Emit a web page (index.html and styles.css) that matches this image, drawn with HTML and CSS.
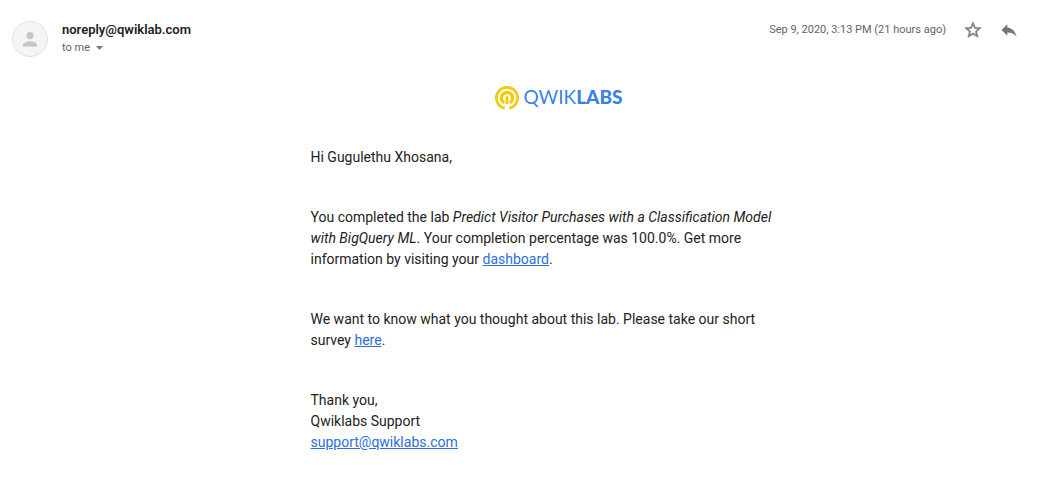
FILE: index.html
```html
<!DOCTYPE html>
<html lang="en">
<head>
<meta charset="utf-8">
<meta name="viewport" content="width=device-width, initial-scale=1">
<title>Qwiklabs email</title>
<link rel="stylesheet" href="styles.css">
</head>
<body>
<article class="message">
  <header class="message-header">
    <svg class="avatar" viewBox="0 0 36 36" aria-hidden="true">
      <circle cx="18" cy="18" r="17.5" fill="#f5f5f5" stroke="#e2e2e2"/>
      <circle cx="18" cy="14.600" r="3.600" fill="#c6c6c6"/>
      <path d="M11 25.600v-1.900c0-2.300 4.700-3.500 7-3.500s7 1.200 7 3.500v1.900z" fill="#c6c6c6"/>
    </svg>
    <div class="sender">
      <h1 class="sender-address">noreply@qwiklab.com</h1>
      <button class="recipient" type="button">to me
        <svg class="caret" viewBox="0 0 7 4" aria-hidden="true"><path d="M0 0h7L3.500 4z" fill="#777"/></svg>
      </button>
    </div>
    <time class="date" datetime="2020-09-09T15:13">Sep 9, 2020, 3:13 PM (21 hours ago)</time>
    <div class="actions">
      <button class="icon-button" type="button" aria-label="Star">
        <svg viewBox="0 0 24 24" aria-hidden="true"><path d="M22 9.240l-7.190-.62L12 2 9.190 8.630 2 9.240l5.460 4.730L5.820 21 12 17.270 18.180 21l-1.630-7.030L22 9.240zM12 15.400l-3.760 2.270 1-4.280-3.320-2.880 4.380-.38L12 6.100l1.710 4.040 4.380.38-3.320 2.880 1 4.280L12 15.400z" fill="#808080" stroke="#808080" stroke-width=".6"/></svg>
      </button>
      <button class="icon-button" type="button" aria-label="Reply">
        <svg viewBox="0 0 24 24" aria-hidden="true"><path d="M10 9V5l-7 7 7 7v-4.100c5 0 8.500 1.600 11 5.100-1-5-4-10-11-11z" fill="#757575"/></svg>
      </button>
    </div>
  </header>
  <div class="message-body">
    <div class="logo">
      <svg class="logo-mark" viewBox="0 0 24 24" aria-hidden="true">
        <g fill="none" stroke="#f4cb0c">
          <path d="M9.600 22.300A10.600 10.600 0 1 1 14.400 22.300" stroke-width="2.800"/>
          <path d="M9.200 16.900A5.600 5.600 0 1 1 14.800 16.900" stroke-width="3.400"/>
        </g>
        <path d="M10.600 11.500a1.400 1.400 0 0 1 2.800 0V18h-2.800z" fill="#f4cb0c"/>
      </svg>
      <span class="logo-name">QWIK<b>LABS</b></span>
    </div>
    <div class="letter">
      <p>Hi Gugulethu Xhosana,</p>
      <p>You completed the lab <em>Predict Visitor Purchases with a Classification Model with BigQuery ML</em>. Your completion percentage was 100.0%. Get more information by visiting your <a href="#dashboard">dashboard</a>.</p>
      <p>We want to know what you thought about this lab. Please take our short survey <a href="#survey">here</a>.</p>
      <p>Thank you,<br>Qwiklabs Support<br><a href="mailto:support@qwiklabs.com">support@qwiklabs.com</a></p>
    </div>
  </div>
</article>
</body>
</html>
```
FILE: styles.css
```css
* {
  box-sizing: border-box;
}

body {
  margin: 0;
  background: #fff;
  color: #222;
  font-family: Roboto, "Liberation Sans", sans-serif;
}

button {
  margin: 0;
  padding: 0;
  border: 0;
  background: none;
  font: inherit;
  color: inherit;
  cursor: pointer;
}

.message-header {
  display: flex;
  align-items: flex-start;
  padding: 20px 22px 0 12px;
}

.avatar {
  flex: none;
  width: 36px;
  height: 36px;
  margin-top: 1px;
}

.sender {
  flex: 1;
  margin-left: 14px;
}

.sender-address {
  margin: 0;
  font-size: 13px;
  font-weight: 600;
  line-height: 20px;
}

.recipient {
  display: flex;
  align-items: center;
  gap: 6px;
  font-size: 11px;
  line-height: 16px;
  color: #5f6368;
}

.caret {
  width: 7px;
  height: 4px;
}

.date {
  font-size: 11px;
  line-height: 20px;
  color: #5f6368;
}

.actions {
  display: flex;
  gap: 16px;
  margin-left: 17px;
}

.icon-button {
  width: 20px;
  height: 20px;
}

.icon-button svg {
  display: block;
  width: 100%;
  height: 100%;
}

.message-body {
  padding: 29px 0 28px 76px;
}

.logo {
  display: flex;
  justify-content: center;
  align-items: center;
  gap: 5px;
}

.logo-mark {
  width: 24px;
  height: 24px;
}

.logo-name {
  font-family: Lato, sans-serif;
  font-size: 19px;
  font-weight: 400;
  line-height: 22px;
  padding-bottom: 2px;
  color: #3b82e8;
}

.logo-name b {
  font-weight: 900;
}

.letter {
  max-width: 496px;
  margin: 37px auto 0;
  padding-right: 16px;
  font-size: 14px;
  line-height: 21px;
}

.letter p {
  margin: 0 0 39px;
}

.letter p:last-child {
  margin-bottom: 0;
}

.letter a {
  color: #2a6fe0;
}
```
